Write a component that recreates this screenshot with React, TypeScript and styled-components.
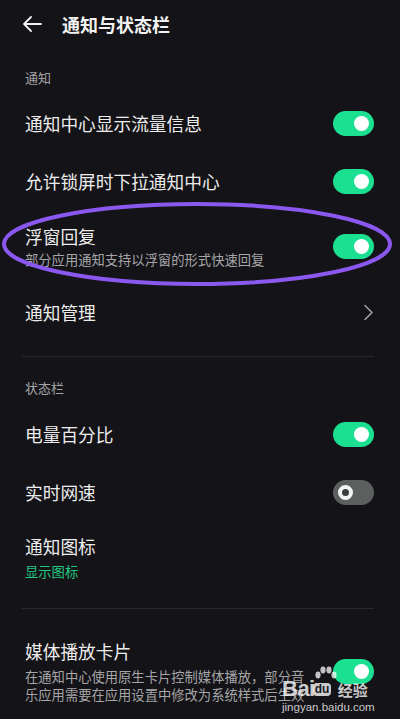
import React from 'react';
import styled, { createGlobalStyle } from 'styled-components';

const GlobalStyle = createGlobalStyle`
  html, body {
    margin: 0;
    padding: 0;
    background: #141317;
  }
  body {
    font-family: "Noto Sans CJK SC", "Noto Sans", sans-serif;
    color: #ededed;
  }
`;

const Page = styled.div`
  position: relative;
  width: 400px;
  height: 719px;
  overflow: hidden;
  background: #141317;
`;

const Header = styled.div`
  height: 48px;
  display: flex;
  align-items: center;
  padding-left: 22px;
  gap: 20px;
`;

const Title = styled.div`
  font-size: 18px;
  font-weight: 700;
  color: #f2f2f2;
  line-height: 24px;
`;

const SectionLabel = styled.div<{ top: number; bottom: number }>`
  padding: ${(p) => p.top}px 25px ${(p) => p.bottom}px;
  font-size: 13px;
  line-height: 20px;
  color: #a3a3a6;
`;

const Row = styled.div<{ height?: number; pt?: number; pb?: number }>`
  display: flex;
  align-items: center;
  justify-content: space-between;
  padding: ${(p) => p.pt ?? 0}px 26px ${(p) => p.pb ?? 0}px 25px;
  ${(p) => (p.height ? `height: ${p.height}px;` : '')}
  box-sizing: border-box;
`;

const TextBlock = styled.div<{ width?: number }>`
  display: flex;
  flex-direction: column;
  ${(p) => (p.width ? `width: ${p.width}px;` : '')}
`;

const RowTitle = styled.div`
  font-size: 17.7px;
  line-height: 24px;
  color: #ededed;
`;

const RowSub = styled.div<{ green?: boolean; gap?: number }>`
  font-size: 13.3px;
  line-height: 18px;
  margin-top: ${(p) => p.gap ?? 3}px;
  color: ${(p) => (p.green ? '#23c982' : '#a6a6a8')};
`;

const Divider = styled.div<{ top: number }>`
  height: 1px;
  margin: ${(p) => p.top}px 26px 0 22px;
  background: #27292c;
`;

const Track = styled.div<{ on: boolean }>`
  flex: none;
  width: 41px;
  height: 25px;
  border-radius: 13px;
  background: ${(p) => (p.on ? '#1bdf91' : '#5b605f')};
  display: flex;
  align-items: center;
  justify-content: ${(p) => (p.on ? 'flex-end' : 'flex-start')};
  padding: 0 5px;
  box-sizing: border-box;
`;

const Thumb = styled.div<{ on: boolean }>`
  width: 15px;
  height: 15px;
  border-radius: 50%;
  box-sizing: border-box;
  background: ${(p) => (p.on ? '#ffffff' : '#3a3d3e')};
  border: ${(p) => (p.on ? 'none' : '4px solid #f4f4f4')};
`;

const Ellipse = styled.svg`
  position: absolute;
  left: 0;
  top: 198px;
  pointer-events: none;
`;

const Watermark = styled.div`
  position: absolute;
  left: 282px;
  top: 662px;
  width: 95px;
  height: 52px;
  color: rgba(255, 255, 255, 0.78);
  font-family: "Liberation Sans", Arial, sans-serif;
`;

const WmLine = styled.div`
  display: flex;
  align-items: flex-end;
  height: 38px;
`;

const WmBai = styled.span`
  font-size: 22px;
  font-weight: 700;
  line-height: 22px;
  letter-spacing: -0.5px;
`;

const WmPaw = styled.div`
  position: relative;
  width: 22px;
  height: 36px;
  display: flex;
  align-items: flex-end;
  margin-left: -2px;
`;

const WmDu = styled.span`
  font-size: 12px;
  font-weight: 700;
  line-height: 12px;
  padding: 0 2px 1px;
  border-radius: 4px;
  background: rgba(255, 255, 255, 0.78);
  color: #1a1a1f;
  margin-bottom: 4px;
`;

const WmJy = styled.span`
  font-family: "Noto Sans CJK SC", sans-serif;
  font-size: 15px;
  line-height: 20px;
  font-weight: 700;
  margin-left: 3px;
`;

const WmUrl = styled.div`
  font-size: 11.5px;
  line-height: 13px;
  margin-top: 1px;
`;

const Toggle = ({ on }: { on: boolean }) => (
  <Track on={on}>
    <Thumb on={on} />
  </Track>
);

const Chevron = () => (
  <svg width="12" height="17" viewBox="0 0 12 17" fill="none">
    <path d="M3 1.5 L10 8.5 L3 15.5" stroke="#9ea1a4" strokeWidth="1.6" strokeLinecap="round" strokeLinejoin="round" />
  </svg>
);

const BackArrow = () => (
  <svg width="20" height="20" viewBox="0 0 20 20" fill="none">
    <path d="M19 10 H2 M9 3 L2 10 L9 17" stroke="#f0f0f0" strokeWidth="1.8" strokeLinecap="round" strokeLinejoin="round" />
  </svg>
);

export default function App() {
  return (
    <Page>
      <GlobalStyle />
      <Header>
        <BackArrow />
        <Title>通知与状态栏</Title>
      </Header>

      <SectionLabel top={20} bottom={6}>通知</SectionLabel>
      <Row height={58}>
        <RowTitle>通知中心显示流量信息</RowTitle>
        <Toggle on />
      </Row>
      <Row height={58}>
        <RowTitle>允许锁屏时下拉通知中心</RowTitle>
        <Toggle on />
      </Row>
      <Row height={72}>
        <TextBlock>
          <RowTitle>浮窗回复</RowTitle>
          <RowSub>部分应用通知支持以浮窗的形式快速回复</RowSub>
        </TextBlock>
        <Toggle on />
      </Row>
      <Row height={60}>
        <RowTitle>通知管理</RowTitle>
        <Chevron />
      </Row>
      <Divider top={14} />

      <SectionLabel top={21} bottom={7}>状态栏</SectionLabel>
      <Row height={58}>
        <RowTitle>电量百分比</RowTitle>
        <Toggle on />
      </Row>
      <Row height={58}>
        <RowTitle>实时网速</RowTitle>
        <Toggle on={false} />
      </Row>
      <Row height={72}>
        <TextBlock>
          <RowTitle>通知图标</RowTitle>
          <RowSub green gap={5}>显示图标</RowSub>
        </TextBlock>
      </Row>
      <Divider top={15} />

      <Row pt={30}>
        <TextBlock width={285}>
          <RowTitle>媒体播放卡片</RowTitle>
          <RowSub gap={5}>在通知中心使用原生卡片控制媒体播放，部分音乐应用需要在应用设置中修改为系统样式后生效</RowSub>
        </TextBlock>
        <Toggle on />
      </Row>

      <Ellipse width="400" height="92" viewBox="0 0 400 92">
        <ellipse cx="197" cy="46" rx="193" ry="40" fill="none" stroke="#8a58ef" strokeWidth="4" />
      </Ellipse>

      <Watermark>
        <WmLine>
          <WmBai>Bai</WmBai>
          <WmPaw>
            <svg width="24" height="20" viewBox="0 0 24 20" style={{ position: 'absolute', left: 0, top: 2 }}>
              <ellipse cx="5" cy="9" rx="2.6" ry="3.4" fill="rgba(255,255,255,0.75)" />
              <ellipse cx="10" cy="4" rx="2.6" ry="3.4" fill="rgba(255,255,255,0.75)" />
              <ellipse cx="16" cy="4" rx="2.6" ry="3.4" fill="rgba(255,255,255,0.75)" />
              <ellipse cx="21" cy="9" rx="2.6" ry="3.4" fill="rgba(255,255,255,0.75)" />
            </svg>
            <WmDu>du</WmDu>
          </WmPaw>
          <WmJy>经验</WmJy>
        </WmLine>
        <WmUrl>jingyan.baidu.com</WmUrl>
      </Watermark>
    </Page>
  );
}
